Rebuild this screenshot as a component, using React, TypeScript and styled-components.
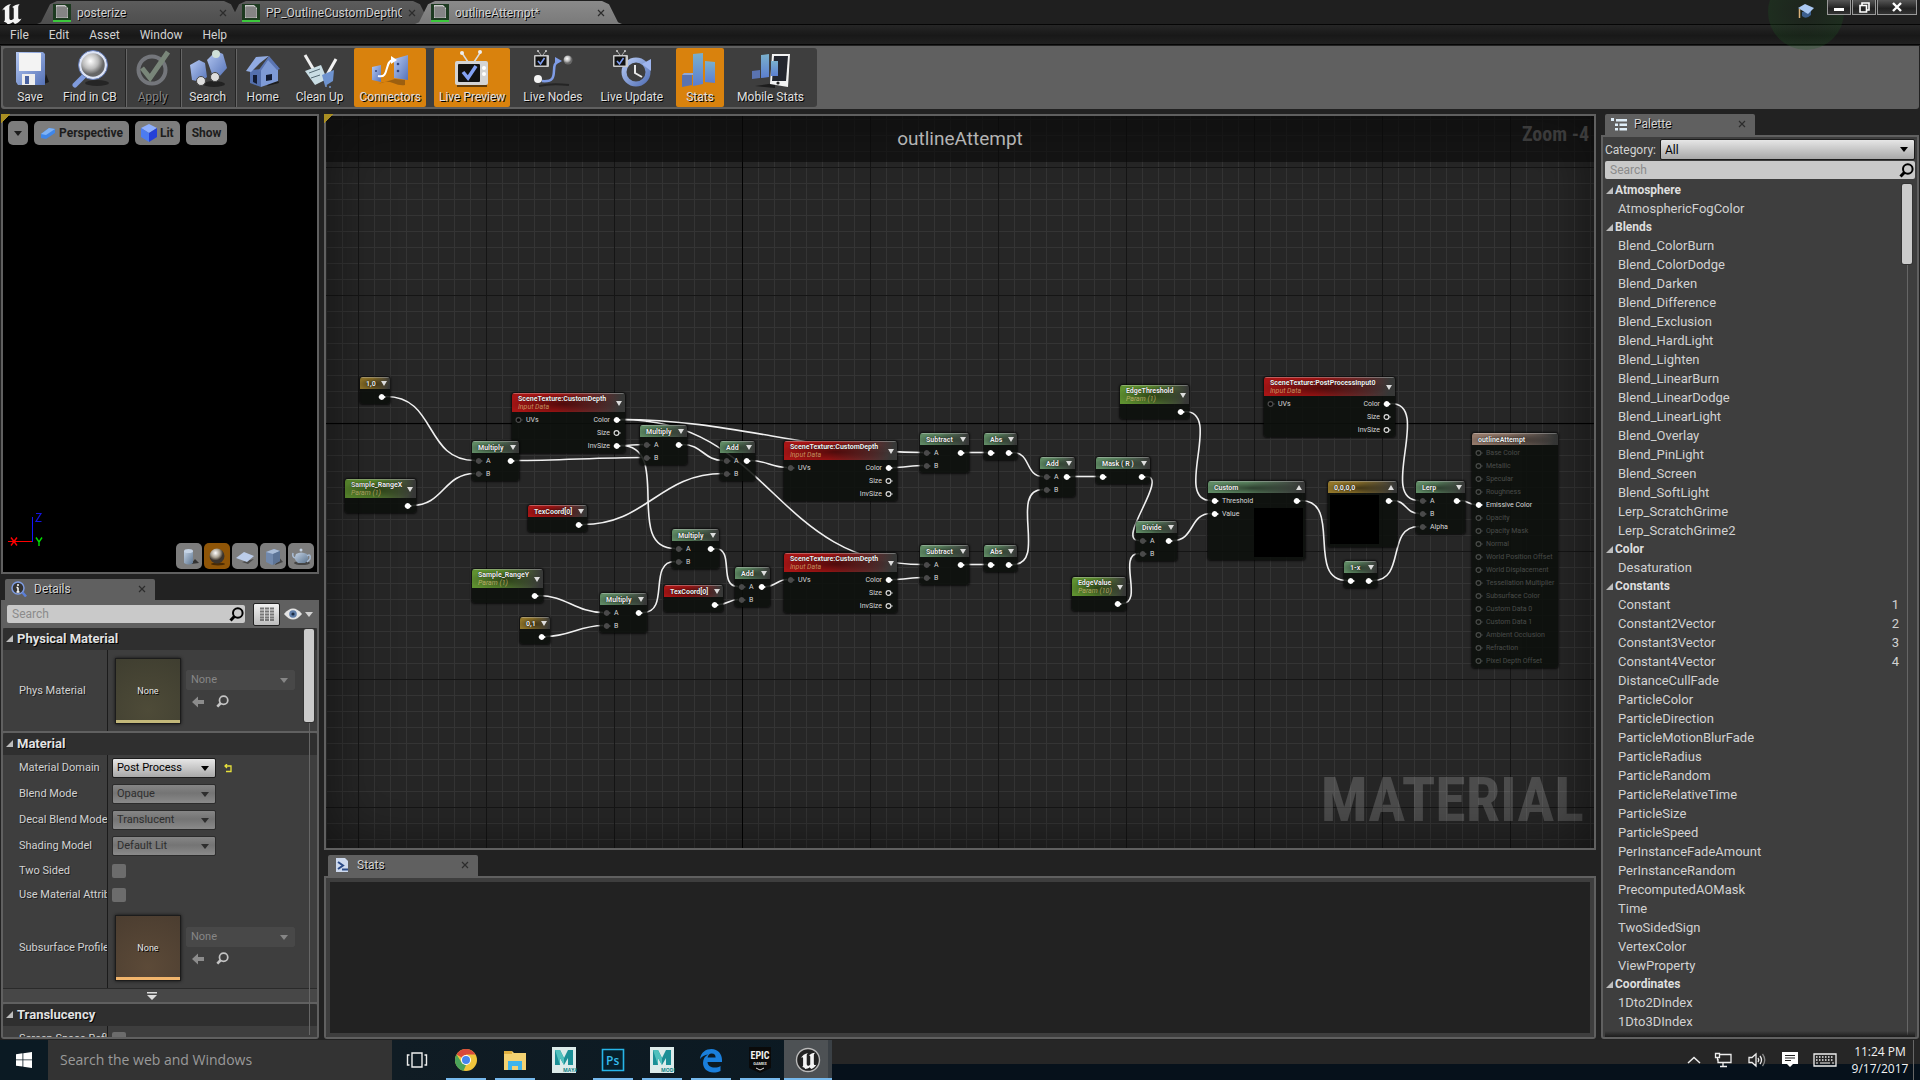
import React from "react";
import styled, { createGlobalStyle, css } from "styled-components";

const GlobalStyle = createGlobalStyle`
  *, *::before, *::after { box-sizing: border-box; }
  body { margin: 0; background: #222; }
  button, input, select { font: inherit; color: inherit; margin: 0; }
  ul { list-style: none; margin: 0; padding: 0; }
  h1, h2, h3, p { margin: 0; font-size: inherit; font-weight: inherit; }
`;

const FRAME = "#606060";
const PANEL = "#3e3e3e";

const Shell = styled.div`
  height: 100vh;
  display: flex;
  flex-direction: column;
  overflow: hidden;
  background: #222;
  color: #d2d2d2;
  font: 12px/16px Roboto, "Liberation Sans", sans-serif;
`;

/* ---------- title bar ---------- */

const TitleBar = styled.header`
  height: 25px;
  flex: none;
  display: flex;
  align-items: flex-start;
  background: #1f1f1f;
  border-bottom: 1px solid #050505;
`;
const LogoBox = styled.div`
  width: 37px;
  padding: 3px 0 0 1px;
`;
const TabStrip = styled.nav`
  display: flex;
  flex: 1;
  padding-top: 1px;
`;
const DocTab = styled.div<{ $active?: boolean }>`
  position: relative;
  z-index: ${(p) => (p.$active ? 2 : 1)};
  width: 207px;
  height: 23px;
  margin-right: -18px;
  padding: 0 17px 0 16px;
  display: flex;
  align-items: center;
  gap: 6px;
  background: ${(p) => (p.$active ? "linear-gradient(#8a8a8a, #7a7a7a)" : "linear-gradient(#5c5c5c, #4e4e4e)")};
  clip-path: polygon(0 100%, 4px 92%, 13px 14%, 20px 0, calc(100% - 20px) 0, calc(100% - 13px) 14%, calc(100% - 4px) 92%, 100% 100%);
  text-shadow: 1px 1px 0 #000;
`;
const DocName = styled.span`
  flex: 1;
  overflow: hidden;
  white-space: nowrap;
`;
const BareButton = styled.button`
  display: inline-flex;
  align-items: center;
  justify-content: center;
  padding: 0;
  border: 0;
  background: none;
`;
const WindowButtons = styled.div`
  display: flex;
  gap: 1px;
  padding-right: 3px;
`;
const WindowButton = styled(BareButton)<{ $wide?: boolean }>`
  position: relative;
  z-index: 4;
  width: ${(p) => (p.$wide ? 40 : 24)}px;
  height: 15px;
  border: 1px solid #999;
  border-top: 0;
  background: linear-gradient(#555, #222 60%, #333);
`;
const Tutorial = styled(BareButton)`
  position: relative;
  z-index: 3;
  width: 42px;
  height: 22px;
  &::before {
    content: "";
    position: absolute;
    left: -17px;
    top: -26px;
    width: 76px;
    height: 76px;
    border-radius: 50%;
    background: radial-gradient(circle, rgba(20, 60, 20, 0.15), rgba(30, 90, 35, 0.32));
    pointer-events: none;
  }
  svg { position: relative; }
`;

/* ---------- menu + tool bar ---------- */

const MenuBar = styled.nav`
  height: 20px;
  flex: none;
  display: flex;
  background: linear-gradient(#262626, #181818 55%, #202020);
  border-bottom: 1px solid #050505;
`;
const MenuItem = styled(BareButton)`
  padding: 0 10px;
`;
const ToolBar = styled.div`
  flex: none;
  display: flex;
  margin: 1px 1px 5px;
  padding: 2px;
  background: ${FRAME};
  border-radius: 0 0 3px 3px;
`;
const Tools = styled.div`
  display: flex;
  align-items: stretch;
  height: 59px;
  padding: 0 4px 0 1px;
  background: ${PANEL};
  border-radius: 3px;
`;
const ToolButton = styled(BareButton)<{ $on?: boolean; $spaced?: boolean; $dim?: boolean }>`
  flex-direction: column;
  justify-content: flex-end;
  gap: 1px;
  min-width: 48px;
  padding: 0 5px 2px;
  margin: 0 ${(p) => (p.$spaced ? 4 : 2)}px;
  border-radius: 2px;
  background: ${(p) => (p.$on ? "#d9820d" : "transparent")};
  color: ${(p) => (p.$dim ? "#858585" : "#e0e0e0")};
  text-shadow: 1px 1px 0 #000;
  svg { width: 40px; height: 38px; margin: 0 -2px; opacity: ${(p) => (p.$dim ? 0.7 : 1)}; }
`;
const ToolDivider = styled.span`
  width: 2px;
  margin: 1px 0 0 1px;
  background: linear-gradient(90deg, #252525 50%, #666 50%);
`;

/* ---------- main area ---------- */

const Main = styled.main`
  flex: 1;
  min-height: 0;
  display: grid;
  grid-template-columns: 318px minmax(0, 1fr) 318px;
  gap: 5px;
  padding: 0 1px 1px;
`;
const Column = styled.div`
  min-height: 0;
  min-width: 0;
  display: flex;
  flex-direction: column;
`;
const Corner = styled.i`
  position: absolute;
  top: -2px;
  left: -2px;
  width: 9px;
  height: 9px;
  background: linear-gradient(135deg, #a98e22 50%, transparent 50%);
`;
const Viewport = styled.section`
  position: relative;
  height: 460px;
  flex: none;
  display: flex;
  flex-direction: column;
  justify-content: space-between;
  padding: 5px 3px 3px 5px;
  background: #000;
  border: 2px solid ${FRAME};
`;
const ViewOptions = styled.div`
  display: flex;
  gap: 6px;
`;
const ViewButton = styled(BareButton)`
  height: 24px;
  gap: 3px;
  padding: 0 6px;
  border-radius: 5px;
  background: #7d7d7d;
  color: #1c1c1c;
  font-weight: 700;
`;
const ViewFooter = styled.div`
  display: flex;
  justify-content: space-between;
  align-items: flex-end;
`;
const Shapes = styled.div`
  display: flex;
  gap: 2px;
`;
const ShapeButton = styled(BareButton)<{ $on?: boolean }>`
  width: 26px;
  height: 26px;
  border-radius: 5px;
  background: ${(p) => (p.$on ? "#8f5507" : "#7d7d7d")};
`;

const PanelTab = styled.div`
  align-self: flex-start;
  width: 150px;
  height: 21px;
  flex: none;
  margin: 0 4px;
  padding: 0 9px 1px 6px;
  display: flex;
  align-items: center;
  gap: 7px;
  background: ${FRAME};
  border-radius: 2px 2px 0 0;
  text-shadow: 1px 1px 0 #000;
`;
const LowerTab = styled(PanelTab)`
  margin-top: 5px;
`;
const Grow = styled.span`
  flex: 1;
`;

/* ---------- details ---------- */

const DetailsPanel = styled.section`
  flex: 1;
  min-height: 0;
  display: flex;
  flex-direction: column;
  padding: 0 2px 2px;
  background: ${FRAME};
  border-radius: 0 0 3px 3px;
`;
const DetailsTools = styled.div`
  height: 28px;
  flex: none;
  display: flex;
  align-items: center;
  padding: 0 4px;
  gap: 8px;
`;
const SearchBox = styled.label`
  flex: 1;
  height: 18px;
  display: flex;
  align-items: center;
  padding: 0 1px 0 5px;
  background: #c9c9c9;
  border-radius: 2px;
  input {
    flex: 1;
    min-width: 0;
    padding: 0;
    border: 0;
    outline: 0;
    background: none;
    color: #111;
  }
  input::placeholder { color: #8b8b8b; opacity: 1; }
`;
const MatrixButton = styled(BareButton)`
  width: 27px;
  height: 23px;
  border: 1px solid #222;
  border-radius: 2px;
  background: linear-gradient(#f0f0f0, #bdbdbd);
`;
const EyeButton = styled(BareButton)`
  gap: 3px;
  margin-left: -4px;
`;
const DetailsScroll = styled.div`
  position: relative;
  flex: 1;
  min-height: 0;
  overflow: hidden;
`;
const Category = styled.section`
  margin-bottom: 2px;
  background: ${PANEL};
`;
const CategoryTitle = styled.h2`
  height: 22px;
  display: flex;
  align-items: center;
  gap: 4px;
  padding: 0 3px 1px;
  background: #2f2f2f;
  border-radius: 3px 3px 0 0;
  color: #e2e2e2;
  font-weight: 700;
  font-size: 13px;
  text-shadow: 1px 1px 0 #000;
`;
const Row = styled.div<{ $h: number }>`
  height: ${(p) => p.$h}px;
  display: flex;
  align-items: center;
`;
const RowLabel = styled.label`
  width: 105px;
  height: 100%;
  flex: none;
  display: flex;
  align-items: center;
  padding-left: 16px;
  border-right: 1px solid #1b1b1b;
  overflow: hidden;
  white-space: nowrap;
  font-size: 11px;
  text-shadow: 1px 1px 0 #222;
`;
const RowValue = styled.div`
  display: flex;
  align-items: center;
  gap: 8px;
  padding-left: 4px;
`;
const SelectWrap = styled.span<{ $w?: number; $look?: "dim" | "flat" }>`
  display: grid;
  align-items: center;
  width: ${(p) => (p.$w ? p.$w + "px" : "auto")};
  flex: ${(p) => (p.$w ? "none" : 1)};
  height: ${(p) => (p.$w ? 20 : 21)}px;
  border: 1px solid #1c1c1c;
  border-radius: 2px;
  background: linear-gradient(#e6e6e6, #a8a8a8);
  color: #000;
  font-size: ${(p) => (p.$w ? 11 : 12)}px;
  ${(p) =>
    p.$look === "dim" &&
    css`
      border-color: #2c2c2c;
      background: linear-gradient(#868686, #747474 45%, #8a8a8a);
      color: #2e2e2e;
    `}
  ${(p) =>
    p.$look === "flat" &&
    css`
      border-color: #484848;
      background: #484848;
      color: #868686;
    `}
  select {
    grid-area: 1 / 1;
    width: 100%;
    height: 100%;
    padding: 0 4px;
    border: 0;
    outline: 0;
    appearance: none;
    background: none;
    color: inherit;
  }
  svg {
    grid-area: 1 / 1;
    justify-self: end;
    margin-right: 6px;
    pointer-events: none;
  }
`;
const CheckBox = styled.input`
  appearance: none;
  width: 14px;
  height: 14px;
  border-radius: 2px;
  background: #6c6c6c;
`;
const Thumb = styled.div<{ $tint: string; $bar: string }>`
  width: 66px;
  height: 66px;
  margin-left: 3px;
  display: flex;
  align-items: center;
  justify-content: center;
  border: 1px solid #1c1c1c;
  background: linear-gradient(${(p) => p.$bar}, ${(p) => p.$bar}) bottom / 100% 3px no-repeat, ${(p) => p.$tint};
  box-shadow: 0 0 3px #111;
  color: #e6e6e6;
  font-size: 9px;
  text-shadow: 1px 1px 0 #000;
`;
const AssetControls = styled.div`
  display: flex;
  flex-direction: column;
  gap: 5px;
  margin-left: -3px;
  padding-bottom: 3px;
`;
const AssetButtons = styled.div`
  display: flex;
  gap: 12px;
  padding-left: 6px;
`;
const Expander = styled(BareButton)`
  display: flex;
  width: 100%;
  height: 14px;
  padding-right: 16px;
  border-top: 1px solid #2a2a2a;
  background: #474747;
`;
const ScrollTrack = styled.div`
  position: absolute;
  top: 1px;
  right: 3px;
  bottom: 2px;
  width: 10px;
  background: linear-gradient(#666, #666) center / 1px 100% no-repeat;
`;
const ScrollThumb = styled.div<{ $h: number }>`
  height: ${(p) => p.$h}px;
  background: #cbcbcb;
  border-radius: 2px;
  box-shadow: 0 0 0 1px #333;
`;

/* ---------- graph ---------- */

const Graph = styled.section`
  position: relative;
  flex: 1;
  min-height: 0;
  border: 2px solid ${FRAME};
  background-color: #262626;
  background-image:
    linear-gradient(90deg, #000 1px, transparent 1px),
    linear-gradient(#000 1px, transparent 1px),
    linear-gradient(90deg, #151515 1px, transparent 1px),
    linear-gradient(#151515 1px, transparent 1px),
    linear-gradient(90deg, #343434 1px, transparent 1px),
    linear-gradient(#343434 1px, transparent 1px);
  background-size: 4000px 100%, 100% 4000px, 128px 128px, 128px 128px, 16px 16px, 16px 16px;
  background-position: 416px 0, 0 307px, 32px 0, 0 51px, 0 0, 0 3px;
`;
const Canvas = styled.div`
  position: absolute;
  inset: 0;
  overflow: hidden;
`;
const Vignette = styled.div`
  position: absolute;
  inset: 0;
  box-shadow: inset 0 0 60px rgba(0, 0, 0, 0.55);
  pointer-events: none;
`;
const GraphHeader = styled.header`
  position: relative;
  height: 46px;
  display: grid;
  grid-template-columns: 1fr auto 1fr;
  align-items: center;
  padding: 0 5px;
  background: rgba(10, 10, 10, 0.62);
`;
const GraphTitle = styled.h1`
  grid-column: 2;
  color: #b4b4b4;
  font-size: 19px;
  line-height: 24px;
`;
const ZoomLabel = styled.span`
  justify-self: end;
  align-self: start;
  padding-top: 6px;
  color: #3b3b3b;
  font: 700 20px/24px "Roboto Condensed", Roboto, sans-serif;
`;
const Watermark = styled.p`
  position: absolute;
  right: 10px;
  bottom: 10px;
  color: rgba(255, 255, 255, 0.18);
  font: 700 62px/76px "Roboto Condensed", Roboto, sans-serif;
`;
const WireLayer = styled.svg`
  position: absolute;
  inset: 0;
  width: 100%;
  height: 100%;
  path { fill: none; stroke: #f0f0f0; stroke-width: 1.6; }
`;

type Tone = "math" | "tex" | "param" | "const" | "root";
const tones: Record<Tone, string> = {
  math: "#5f8a64",
  tex: "#a81515",
  param: "#5f9130",
  const: "#92762a",
  root: "#93796a",
};

const NodeBox = styled.article<{ $x: number; $y: number; $w: number; $h?: number }>`
  position: absolute;
  left: ${(p) => p.$x}px;
  top: ${(p) => p.$y}px;
  width: ${(p) => p.$w}px;
  ${(p) => p.$h && `height: ${p.$h}px;`}
  padding-bottom: 1px;
  display: flex;
  flex-direction: column;
  border-radius: 3px;
  background: rgba(13, 16, 13, 0.88);
  box-shadow: 0 0 2px 1px rgba(0, 0, 0, 0.7);
  font-size: 7px;
  line-height: 8px;
  overflow: hidden;
`;
const NodeHead = styled.header<{ $tone: Tone; $tall?: boolean }>`
  height: ${(p) => (p.$tall ? 19 : 12)}px;
  margin-bottom: 1px;
  display: flex;
  align-items: center;
  justify-content: space-between;
  padding: 0 3px 0 6px;
  border-top: 1px solid rgba(255, 255, 255, 0.3);
  background:
    radial-gradient(ellipse 50% 60% at 45% 55%, rgba(0, 0, 0, 0.5), transparent),
    linear-gradient(100deg, ${(p) => tones[p.$tone]} 40%, rgba(60, 60, 60, 0.9) 95%);
`;
const NodeName = styled.h3`
  color: #f0f0f0;
  font-weight: 700;
  white-space: nowrap;
  text-shadow: 0 0 1px #000;
`;
const NodeNote = styled.p`
  color: rgba(225, 200, 130, 0.7);
  font-style: italic;
`;
const NodeBody = styled.div`
  flex: 1;
  display: flex;
  justify-content: space-between;
  padding: 0 4px 0 3px;
`;
const PinList = styled.ul<{ $end?: boolean }>`
  li {
    height: 13px;
    display: flex;
    align-items: center;
    justify-content: ${(p) => (p.$end ? "flex-end" : "flex-start")};
    gap: 3px;
    color: #d8d8d8;
    white-space: nowrap;
  }
`;
const PinItem = styled.li<{ $off?: boolean }>`
  opacity: ${(p) => (p.$off ? 0.28 : 1)};
`;
const Preview = styled.div<{ $left?: boolean }>`
  position: absolute;
  width: 49px;
  height: 49px;
  bottom: 3px;
  ${(p) => (p.$left ? "left: 2px;" : "right: 2px;")}
  background: #000;
`;

/* ---------- stats ---------- */

const StatsPanel = styled.section`
  height: 163px;
  flex: none;
  border: 2px solid ${FRAME};
  border-radius: 0 0 3px 3px;
  outline: 4px solid ${PANEL};
  outline-offset: -6px;
  background: #222;
`;

/* ---------- palette ---------- */

const PalettePanel = styled.section`
  flex: 1;
  min-height: 0;
  display: flex;
  flex-direction: column;
  border: 2px solid ${FRAME};
  border-radius: 0 0 3px 3px;
  background: ${PANEL};
  padding: 2px 2px 0;
`;
const CategoryRow = styled.div`
  display: flex;
  align-items: center;
  gap: 4px;
`;
const PaletteSearch = styled(SearchBox)`
  flex: none;
  margin-top: 1px;
`;
const PaletteScroll = styled.div`
  position: relative;
  flex: 1;
  min-height: 0;
  margin-top: 2px;
  overflow: hidden;
  &::after {
    content: "";
    position: absolute;
    inset: auto 0 0;
    height: 6px;
    background: linear-gradient(transparent, #1c1c1c);
  }
`;
const GroupName = styled.h3`
  height: 18px;
  display: flex;
  align-items: center;
  gap: 2px;
  padding-left: 1px;
  color: #dedede;
  font-weight: 700;
`;
const Entry = styled.li`
  height: 19px;
  display: flex;
  align-items: center;
  justify-content: space-between;
  padding: 0 16px 0 13px;
  font-size: 13px;
`;
const PaletteTrack = styled(ScrollTrack)`
  top: 3px;
  right: 3px;
`;

/* ---------- task bar ---------- */

const TaskBar = styled.footer`
  height: 40px;
  flex: none;
  display: flex;
  background: linear-gradient(#262626 24px, #06111b 24px);
  font-family: "Open Sans", "Noto Sans", sans-serif;
`;
const StartButton = styled(BareButton)`
  width: 48px;
  background: #0b1a23;
`;
const TaskSearch = styled.input`
  width: 344px;
  padding: 0 12px;
  border: 0;
  outline: 0;
  background: #333;
  font-size: 14px;
  &::placeholder { color: #9a9a9a; opacity: 1; }
`;
const TaskApps = styled.div`
  display: flex;
  background: linear-gradient(90deg, #101c24, #0b1922);
`;
const TaskApp = styled(BareButton)<{ $run?: boolean; $active?: boolean }>`
  width: ${(p) => (p.$active ? 48 : 49)}px;
  background:
    ${(p) => (p.$run ? `linear-gradient(#76b9ed, #76b9ed) bottom / ${p.$active ? 48 : 40}px 2px no-repeat,` : "")}
    ${(p) => (p.$active ? "linear-gradient(90deg, #4d5154 44px, #3a4045 44px)" : "none")};
  svg { width: 26px; height: 26px; }
`;
const Tray = styled.div`
  display: flex;
  align-items: center;
  gap: 13px;
  padding-right: 10px;
`;
const Clock = styled.time`
  width: 66px;
  align-self: center;
  text-align: center;
  color: #f2f2f2;
  font-size: 12px;
  line-height: 17px;
`;
const ShowDesktop = styled(BareButton)`
  width: 5px;
  margin-right: 2px;
  border-left: 1px solid #666;
`;

/* ---------- icons ---------- */

const UnrealMark = ({ size }: { size: number }) => (
  <svg width={size} height={size} viewBox="0 0 24 24" fill="#f4f4f4">
    <path d="M1 8.500C3 4.500 6.500 2 11 1.200c-1.300 1-1.900 2.100-1.900 3.600v11.200c0 1.700.7 2.500 1.900 2.500 1.100 0 2.100-.7 2.900-1.700V6.500c0-1.200-.6-1.900-1.900-1.800 2.500-2.200 5-3.300 8.500-3.700-1.300 1.300-1.700 2.300-1.700 3.900v11c0 1.300.5 1.800 1.400 1.800.8 0 1.500-.4 2.200-.9-1.700 3-3.900 4.900-7.200 6.200l-2.100-2.200c-1.600 1.400-3.600 2.200-6.100 2.200-.8-1.700-2.300-2.500-4-2.600.9-.6 1.200-1.200 1.200-2.300V8.200c0-.8-.4-1.200-1-1.200-.7 0-1.400.5-2.200 1.500z" />
  </svg>
);
const DocIcon = () => (
  <svg width="18" height="18" viewBox="0 0 18 18">
    <rect width="18" height="18" fill="#1d3a20" />
    <path d="M3 1h9l3 3v10H3z" fill="#c8c8c8" />
    <path d="M5 2v12M7 2v12M9 2v12M11 2v12M13 3v11M3 4h11M3 6h12M3 8h12M3 10h12M3 12h12" stroke="#555" strokeWidth=".7" />
    <rect y="16" width="18" height="2" fill="#3cc83c" />
  </svg>
);
const Cross = () => (
  <svg width="8" height="8" viewBox="0 0 8 8"><path d="M1 1l6 6M7 1L1 7" stroke="#2c2c2c" strokeWidth="1.200" /></svg>
);
const Caret = ({ up }: { up?: boolean }) => (
  <svg width="8" height="5" viewBox="0 0 8 5"><path d={up ? "M0 5h8L4 0z" : "M0 0h8L4 5z"} fill="currentColor" /></svg>
);
const Fold = () => (
  <svg width="7" height="7" viewBox="0 0 7 7"><path d="M7 0v7H0z" fill="#bdbdbd" /></svg>
);
const Magnifier = ({ size = 15, color = "#000" }: { size?: number; color?: string }) => (
  <svg width={size} height={size} viewBox="0 0 15 15" fill="none" stroke={color}>
    <circle cx="8.800" cy="6" r="4.800" strokeWidth="2" /><path d="M5.300 9.500L1.500 13.500" strokeWidth="3" />
  </svg>
);
const BackArrow = () => (
  <svg width="12" height="12" viewBox="0 0 12 12"><path d="M0 6l6-5.500v3.500h6v4H6v3.500z" fill="#8c8c8c" /></svg>
);

const DefsHolder = styled.svg`
  position: absolute;
  width: 0;
  height: 0;
`;
const Defs = () => (
  <DefsHolder aria-hidden="true">
    <defs>
      <linearGradient id="blue" x1="0" y1="0" x2="1" y2="1"><stop offset="0" stopColor="#b4c8f2" /><stop offset="1" stopColor="#5673b8" /></linearGradient>
      <linearGradient id="cyan" x1="0" y1="0" x2="0" y2="1"><stop offset="0" stopColor="#7ab0cc" /><stop offset="1" stopColor="#5b7ed0" /></linearGradient>
      <linearGradient id="steel" x1="0" y1="0" x2="1" y2="1"><stop offset="0" stopColor="#c3d2e4" /><stop offset="1" stopColor="#5d7590" /></linearGradient>
      <radialGradient id="lens" cx=".4" cy=".35"><stop offset="0" stopColor="#fff" /><stop offset=".6" stopColor="#bbb" /><stop offset="1" stopColor="#666" /></radialGradient>
      <radialGradient id="ball" cx=".4" cy=".3"><stop offset="0" stopColor="#fff" /><stop offset=".6" stopColor="#a8a090" /><stop offset="1" stopColor="#3c342c" /></radialGradient>
    </defs>
  </DefsHolder>
);

const tv = (
  <g>
    <path d="M8 5L5 1M10 5l3-4" stroke="#ccc" strokeWidth=".8" />
    <circle cx="5" cy="1" r=".9" fill="#ddd" /><circle cx="13" cy="1" r=".9" fill="#ddd" />
    <rect x="1" y="5" width="15" height="12" rx="1" fill="#c9c9c9" />
    <rect x="2.500" y="6.500" width="11" height="9" fill="#111" />
    <path d="M5 11l2.500 3 4-6" fill="none" stroke="#7d9cf0" strokeWidth="1.600" />
  </g>
);

const toolIcons: Record<string, React.ReactNode> = {
  Save: (<><path d="M34 34l5-2-3-8z" fill="#1c1c1c" /><path d="M6 2h27l2 2v31H8l-2-3z" fill="url(#blue)" /><path d="M9 3h22v18H9z" fill="#f3f3f3" /><path d="M12 24h13v11H12z" fill="#eee" /><path d="M15 26h4v8h-4z" fill="#4a62a0" /></>),
  Find: (<><ellipse cx="27" cy="33" rx="12" ry="3" fill="#252525" /><path d="M16 24L5 35" stroke="#7f9bdd" strokeWidth="5" strokeLinecap="round" /><circle cx="23" cy="15" r="13" fill="url(#lens)" stroke="#dde4f5" strokeWidth="2.500" /><circle cx="23" cy="15" r="14.500" fill="none" stroke="#6a82bd" strokeWidth="1" /></>),
  Apply: (<><circle cx="19" cy="20" r="13.500" fill="none" stroke="#8b8f96" strokeWidth="4" /><path d="M9 18l8 10L35 2" fill="none" stroke="#93a592" strokeWidth="5" /></>),
  Search: (<><ellipse cx="26" cy="34" rx="11" ry="3" fill="#222" /><path d="M2 15l9-5 6 3 2 14-6 5-9-2z" fill="url(#blue)" /><path d="M19 10l9-9 7 3 4 14-8 9-7-3z" fill="url(#blue)" /><circle cx="13" cy="31" r="4.500" fill="#ddd" stroke="#444" /><circle cx="27" cy="27" r="4.500" fill="#ddd" stroke="#444" /><circle cx="28" cy="4" r="4" fill="#cfe0d8" /></>),
  Home: (<><path d="M24 36l12-3-4-10z" fill="#1c1c1c" /><path d="M7 20v13l11 4V19z" fill="#5470ae" /><path d="M18 19l8-11 9 9v14l-17 6z" fill="#7e9ad6" /><path d="M26 6L13 7 3 21l5 1 9-9" fill="#91abe2" /><path d="M26 6l11 13-3 1-9-10-8 12-2-1z" fill="#5a74b2" /><path d="M10 25h4v9l-4-2zM23 25l6-1v6l-6 1z" fill="#121b33" /></>),
  Clean: (<><path d="M5 5l10 17" stroke="#eee" strokeWidth="3" /><path d="M5 21l16-6 6 14-12 6z" fill="#c9dde4" /><path d="M36 9L27 25" stroke="#f2f2f2" strokeWidth="3" /><path d="M22 25l12-5-1 11-8 5z" fill="#6e93cf" /><path d="M9 23l11-4M11 28l9-3" stroke="#556a75" /><circle cx="30" cy="37" r="1" fill="#79c" /><circle cx="26" cy="36" r="1" fill="#79c" /></>),
  Connectors: (<><path d="M8 34q8-4 15-1t12 2v-5l-10-1z" fill="#9c5f10" /><path d="M2 17l9-2v17l-9-2z" fill="url(#blue)" /><path d="M24 9l14-4v25l-14-2z" fill="url(#blue)" /><path d="M8 26c12 3 6-15 15-16" fill="none" stroke="#fff" strokeWidth="2" /><path d="M21 6l6 4-6 4z" fill="#fff" /><circle cx="28" cy="14" r="1.300" fill="#33457c" /><circle cx="28" cy="21" r="1.300" fill="#33457c" /><circle cx="6" cy="21" r="1" fill="#33457c" /></>),
  Preview: (<><path d="M16 12L10 3M22 12l6-9" stroke="#ddd" strokeWidth="1.500" /><circle cx="10" cy="3" r="2" fill="#eee" /><circle cx="28" cy="2" r="2" fill="#eee" /><path d="M5 34h30v3H5z" fill="#5f3b0b" /><rect x="3" y="11" width="33" height="24" rx="2" fill="#d4d4d4" /><rect x="6" y="14" width="22" height="18" rx="1" fill="#121212" /><path d="M11 22l5 6 8-12" fill="none" stroke="#84a2f4" strokeWidth="3.500" /><circle cx="32" cy="18" r="2" fill="#fff" /><circle cx="32" cy="24" r="2" fill="#fff" /></>),
  Nodes: (<>{tv}<path d="M9 31c20 2 6-17 17-20" fill="none" stroke="#7f9ce6" strokeWidth="2.500" /><path d="M22 7l7 4-7 4z" fill="#7f9ce6" /><circle cx="35" cy="10" r="4.500" fill="url(#lens)" /><circle cx="5" cy="29" r="4" fill="#f4f4f4" /><path d="M6 36q12-3 30-1" stroke="#252525" strokeWidth="2" fill="none" /></>),
  Update: (<><circle cx="24" cy="22" r="12" fill="none" stroke="url(#blue)" strokeWidth="5" /><path d="M30 14l9-5v12z" fill="#9eb5ee" /><path d="M23 15v8l7 4" fill="none" stroke="#e8e8e8" strokeWidth="2" />{tv}</>),
  Stats: (<><path d="M2 25l10-1v11l-10 2z" fill="#5a73b0" /><path d="M13 4l10-1v31l-10 2z" fill="url(#cyan)" /><path d="M25 11l10 1v21l-10-1z" fill="url(#cyan)" /><path d="M2 25l2-2h9v2z" fill="#8fa7d8" /></>),
  Mobile: (<><path d="M4 36l20-3v5z" fill="#1d1d1d" /><path d="M21 4h18l-2 33-18-3z" fill="#f2f2f2" /><path d="M23 6h14l-2 25H21z" fill="#23262e" /><path d="M1 21l8-1v8l-8 1z" fill="#5a73b0" /><path d="M10 5l8-1v23l-8 1z" fill="url(#cyan)" /><path d="M20 11h7v15h-7z" fill="url(#cyan)" /><circle cx="27" cy="33" r="1.600" fill="#222" /></>),
};

const shapeIcons: [string, React.ReactNode][] = [
  ["Cylinder", <><path d="M12 18l8-1-4-4z" fill="#333" /><path d="M5 5v12q5 3 9 0V5z" fill="url(#steel)" /><ellipse cx="9.500" cy="5" rx="4.500" ry="2" fill="#c6d4e6" /></>],
  ["Sphere", <><ellipse cx="11" cy="18" rx="7" ry="1.500" fill="#4a2b04" /><circle cx="10" cy="10" r="7.500" fill="url(#ball)" /></>],
  ["Plane", <><path d="M7 16l6 2 6-5z" fill="#4a4a4a" /><path d="M1 12l8-6 10 4-7 6z" fill="#bccdea" /></>],
  ["Cube", <><path d="M12 19l8-3-5-6z" fill="#444" /><path d="M3 6l8-3 6 2v10l-8 4-6-3z" fill="#7189ad" /><path d="M3 6l8-3 6 2-7 3z" fill="#aabdd8" /><path d="M10 8l7-3v10l-7 4z" fill="#5d7496" /></>],
  ["Teapot", <><ellipse cx="11" cy="17" rx="8" ry="2" fill="#444" /><path d="M5 8q5-3 11 0 3 6-2 9H7q-5-3-2-9z" fill="url(#steel)" /><path d="M4 12Q1 11 2 7M16 10q4-3 3 3l-3 3" fill="none" stroke="#a9bdd6" strokeWidth="1.500" /><circle cx="10" cy="4" r="1.500" fill="#c6d4e6" /></>],
];

/* ---------- graph data ---------- */

interface GraphNode {
  id: string;
  name: string;
  tone: Tone;
  x: number;
  y: number;
  w: number;
  h?: number;
  note?: string;
  ins?: string[];
  outs?: string[];
  closed?: boolean;
  preview?: "left" | "right";
}

const binary = (id: string, name: string, x: number, y: number, w: number): GraphNode => ({ id, name, tone: "math", x, y, w, ins: ["A", "B"], outs: [""] });
const sceneTexture = (id: string, name: string, x: number, y: number, w: number): GraphNode => ({ id, name, tone: "tex", x, y, w, note: "Input Data", ins: ["UVs"], outs: ["Color", "Size", "InvSize"] });
const unary = (id: string, name: string, x: number, y: number, w: number): GraphNode => ({ id, name, tone: "math", x, y, w, ins: [""], outs: [""] });
const source = (id: string, name: string, tone: Tone, x: number, y: number, w: number, note?: string): GraphNode => ({ id, name, tone, x, y, w, note, outs: [""] });

const rootPins = [
  "Base Color", "Metallic", "Specular", "Roughness", "Emissive Color", "Opacity", "Opacity Mask", "Normal",
  "World Position Offset", "World Displacement", "Tessellation Multiplier", "Subsurface Color", "Custom Data 0",
  "Custom Data 1", "Ambient Occlusion", "Refraction", "Pixel Depth Offset",
];

const nodes: GraphNode[] = [
  sceneTexture("st1", "SceneTexture:CustomDepth", 186, 277, 113),
  source("one", "1,0", "const", 34, 261, 30),
  binary("mul1", "Multiply", 146, 325, 47),
  source("rx", "Sample_RangeX", "param", 19, 363, 71, "Param (1)"),
  source("tc1", "TexCoord[0]", "tex", 202, 389, 59),
  binary("mul2", "Multiply", 314, 309, 47),
  binary("add1", "Add", 394, 325, 35),
  binary("mul3", "Multiply", 346, 413, 47),
  source("ry", "Sample_RangeY", "param", 146, 453, 71, "Param (1)"),
  binary("mul4", "Multiply", 274, 477, 47),
  source("zero", "0,1", "const", 194, 501, 30),
  source("tc2", "TexCoord[0]", "tex", 338, 469, 59),
  binary("add2", "Add", 409, 451, 35),
  sceneTexture("st2", "SceneTexture:CustomDepth", 458, 325, 113),
  sceneTexture("st3", "SceneTexture:CustomDepth", 458, 437, 113),
  binary("sub1", "Subtract", 594, 317, 49),
  unary("abs1", "Abs", 658, 317, 33),
  binary("sub2", "Subtract", 594, 429, 49),
  unary("abs2", "Abs", 658, 429, 33),
  binary("add3", "Add", 714, 341, 35),
  unary("mask", "Mask ( R )", 770, 341, 54),
  source("et", "EdgeThreshold", "param", 794, 269, 69, "Param (1)"),
  binary("div", "Divide", 810, 405, 41),
  source("ev", "EdgeValue", "param", 746, 461, 54, "Param (10)"),
  { id: "custom", name: "Custom", tone: "math", x: 882, y: 365, w: 97, h: 79, ins: ["Threshold", "Value"], outs: [""], closed: true, preview: "right" },
  { id: "vec", name: "0,0,0,0", tone: "const", x: 1002, y: 365, w: 69, h: 66, outs: [""], closed: true, preview: "left" },
  sceneTexture("pp", "SceneTexture:PostProcessInput0", 938, 261, 131),
  { id: "lerp", name: "Lerp", tone: "math", x: 1090, y: 365, w: 49, ins: ["A", "B", "Alpha"], outs: [""] },
  unary("inv", "1-x", 1018, 445, 33),
  { id: "root", name: "outlineAttempt", tone: "root", x: 1146, y: 317, w: 86, ins: rootPins },
];

const wires: [string, number, string, number][] = [
  ["one", 0, "mul1", 0], ["rx", 0, "mul1", 1], ["st1", 2, "mul2", 0], ["mul1", 0, "mul2", 1],
  ["st1", 2, "mul3", 0], ["mul4", 0, "mul3", 1], ["ry", 0, "mul4", 0], ["zero", 0, "mul4", 1],
  ["mul2", 0, "add1", 0], ["tc1", 0, "add1", 1], ["mul3", 0, "add2", 0], ["tc2", 0, "add2", 1],
  ["add1", 0, "st2", 0], ["add2", 0, "st3", 0], ["st1", 0, "sub1", 0], ["st1", 0, "sub2", 0],
  ["st2", 0, "sub1", 1], ["st3", 0, "sub2", 1], ["sub1", 0, "abs1", 0], ["sub2", 0, "abs2", 0],
  ["abs1", 0, "add3", 0], ["abs2", 0, "add3", 1], ["add3", 0, "mask", 0], ["mask", 0, "div", 0],
  ["ev", 0, "div", 1], ["div", 0, "custom", 1], ["et", 0, "custom", 0], ["custom", 0, "inv", 0],
  ["inv", 0, "lerp", 2], ["vec", 0, "lerp", 1], ["pp", 0, "lerp", 0], ["lerp", 0, "root", 4],
];

const byId = Object.fromEntries(nodes.map((n) => [n.id, n]));
const pinY = (n: GraphNode, row: number) => n.y + (n.note ? 26 : 19) + row * 13 + 0.5;

const wirePath = ([from, out, to, into]: [string, number, string, number]) => {
  const a = byId[from];
  const b = byId[to];
  const x1 = a.x + a.w - 4;
  const y1 = pinY(a, out);
  const x2 = b.x + 3;
  const y2 = pinY(b, into);
  const reach = (Math.abs(x2 - x1) + Math.abs(y2 - y1)) / 3;
  return `M${x1} ${y1}C${x1 + reach} ${y1} ${x2 - reach} ${y2} ${x2} ${y2}`;
};

const Pin = ({ state }: { state: "on" | "open" | "hollow" | "dim" }) => {
  const ring = state === "open" ? "#ddd" : "#4c4c4c";
  return (
    <svg width="8" height="8" viewBox="0 0 8 8">
      {state === "open" || state === "hollow" ? (
        <><circle cx="3.500" cy="4" r="2.400" fill={state === "open" ? "none" : "#050505"} stroke={ring} strokeWidth="1.200" /><path d="M6.500 3l1.500 1-1.500 1z" fill={ring} /></>
      ) : (
        <path d="M3.500 1q2 0 3 2l1.500 1-1.500 1q-1 2-3 2t-3-3q1-3 3-3z" fill={state === "on" ? "#fff" : "#4a4a4a"} />
      )}
    </svg>
  );
};

const linked = (id: string, row: number, side: "in" | "out") =>
  wires.some((w) => (side === "in" ? w[2] === id && w[3] === row : w[0] === id && w[1] === row));

const inState = (n: GraphNode, row: number, label: string) => {
  if (!linked(n.id, row, "in")) return n.tone === "root" ? "open" : "hollow";
  return ["A", "B", "Alpha", "UVs"].includes(label) ? "dim" : "on";
};

const NodeView = ({ n }: { n: GraphNode }) => (
  <NodeBox $x={n.x} $y={n.y} $w={n.w} $h={n.h}>
    <NodeHead $tone={n.tone} $tall={!!n.note}>
      <div>
        <NodeName>{n.name}</NodeName>
        {n.note && <NodeNote>{n.note}</NodeNote>}
      </div>
      {n.tone !== "root" && (
        <svg width="6" height="5" viewBox="0 0 6 5"><path d={n.closed ? "M0 5h6L3 0z" : "M0 0h6L3 5z"} fill="#ddd" /></svg>
      )}
    </NodeHead>
    <NodeBody>
      <PinList>
        {(n.ins || []).map((label, i) => (
          <PinItem key={i} $off={n.tone === "root" && i !== 4}>
            <Pin state={inState(n, i, label)} />
            {label}
          </PinItem>
        ))}
      </PinList>
      <PinList $end>
        {(n.outs || []).map((label, i) => (
          <PinItem key={i}>
            {label}
            <Pin state={linked(n.id, i, "out") ? "on" : "open"} />
          </PinItem>
        ))}
      </PinList>
    </NodeBody>
    {n.preview && <Preview $left={n.preview === "left"} />}
  </NodeBox>
);

/* ---------- palette data ---------- */

const palette: [string, string[]][] = [
  ["Atmosphere", ["AtmosphericFogColor"]],
  ["Blends", ["Blend_ColorBurn", "Blend_ColorDodge", "Blend_Darken", "Blend_Difference", "Blend_Exclusion", "Blend_HardLight", "Blend_Lighten", "Blend_LinearBurn", "Blend_LinearDodge", "Blend_LinearLight", "Blend_Overlay", "Blend_PinLight", "Blend_Screen", "Blend_SoftLight", "Lerp_ScratchGrime", "Lerp_ScratchGrime2"]],
  ["Color", ["Desaturation"]],
  ["Constants", ["Constant|1", "Constant2Vector|2", "Constant3Vector|3", "Constant4Vector|4", "DistanceCullFade", "ParticleColor", "ParticleDirection", "ParticleMotionBlurFade", "ParticleRadius", "ParticleRandom", "ParticleRelativeTime", "ParticleSize", "ParticleSpeed", "PerInstanceFadeAmount", "PerInstanceRandom", "PrecomputedAOMask", "Time", "TwoSidedSign", "VertexColor", "ViewProperty"]],
  ["Coordinates", ["1Dto2DIndex", "1Dto3DIndex"]],
];

const Dropdown = ({ id, value, w, look }: { id: string; value: string; w?: number; look?: "dim" | "flat" }) => (
  <SelectWrap $w={w} $look={look}>
    <select id={id} defaultValue={value}><option>{value}</option></select>
    <Caret />
  </SelectWrap>
);

const AssetRow = ({ id, label, tint, bar }: { id: string; label: string; tint: string; bar: string }) => (
  <Row $h={81}>
    <RowLabel htmlFor={id}>{label}</RowLabel>
    <RowValue>
      <Thumb $tint={tint} $bar={bar}>None</Thumb>
      <AssetControls>
        <Dropdown id={id} value="None" w={109} look="flat" />
        <AssetButtons>
          <BareButton aria-label="Use selected"><BackArrow /></BareButton>
          <BareButton aria-label="Browse"><Magnifier size={13} color="#c4c4c4" /></BareButton>
        </AssetButtons>
      </AssetControls>
    </RowValue>
  </Row>
);

const Tool = ({ icon, label, ...rest }: { icon: string; label: string; $on?: boolean; $spaced?: boolean; $dim?: boolean }) => (
  <ToolButton {...rest}>
    <svg viewBox="0 0 40 38">{toolIcons[icon]}</svg>
    {label}
  </ToolButton>
);

const maya = (word: string) => (
  <svg viewBox="0 0 26 26"><path d="M1 0h24v26H1z" fill="#dcebea" /><path d="M4 3h5l4 8 4-8h5v15h-5v-7l-4 7-4-7v7H4z" fill="#1b8f96" /><path d="M4 3h5l4 8v7l-4-7v7z" fill="#4fc0bd" /><text x="12" y="25" fontSize="5" fontWeight="700" fill="#0f7f86">{word}</text></svg>
);

export default function App() {
  return (
    <Shell>
      <GlobalStyle />
      <Defs />
      <TitleBar>
        <LogoBox><UnrealMark size={22} /></LogoBox>
        <TabStrip>
          {["posterize", "PP_OutlineCustomDepthC", "outlineAttempt*"].map((name, i) => (
            <DocTab key={name} $active={i === 2}>
              <DocIcon />
              <DocName>{name}</DocName>
              <BareButton aria-label={"Close " + name}><Cross /></BareButton>
            </DocTab>
          ))}
        </TabStrip>
        <Tutorial aria-label="Tutorials">
          <svg width="16" height="15" viewBox="0 0 16 15"><path d="M4 8v4q4 4 9-1V7z" fill="#3c5f8e" /><path d="M0 4l7-4 9 4-6 6z" fill="#a9c8f2" /><path d="M1.500 5v9" stroke="#d9b27a" strokeWidth="1.500" /></svg>
        </Tutorial>
        <WindowButtons>
          <WindowButton aria-label="Minimize"><svg width="10" height="10"><path d="M0 6h10v3H0z" fill="#fff" /></svg></WindowButton>
          <WindowButton aria-label="Restore"><svg width="11" height="11" fill="none" stroke="#fff" strokeWidth="1.600"><path d="M3 3V1h7v7H8M1 3.500h6.500v6.500H1z" /></svg></WindowButton>
          <WindowButton $wide aria-label="Close"><svg width="10" height="10"><path d="M1 1l8 8M9 1L1 9" stroke="#fff" strokeWidth="2.400" /></svg></WindowButton>
        </WindowButtons>
      </TitleBar>
      <MenuBar>
        {["File", "Edit", "Asset", "Window", "Help"].map((m) => <MenuItem key={m}>{m}</MenuItem>)}
      </MenuBar>
      <ToolBar>
        <Tools>
          <Tool icon="Save" label="Save" />
          <Tool icon="Find" label="Find in CB" />
          <ToolDivider />
          <Tool icon="Apply" label="Apply" $dim />
          <ToolDivider />
          <Tool icon="Search" label="Search" />
          <ToolDivider />
          <Tool icon="Home" label="Home" />
          <Tool icon="Clean" label="Clean Up" />
          <Tool icon="Connectors" label="Connectors" $on $spaced />
          <Tool icon="Preview" label="Live Preview" $on $spaced />
          <Tool icon="Nodes" label="Live Nodes" $spaced />
          <Tool icon="Update" label="Live Update" $spaced />
          <Tool icon="Stats" label="Stats" $on $spaced />
          <Tool icon="Mobile" label="Mobile Stats" $spaced />
        </Tools>
      </ToolBar>

      <Main>
        <Column>
          <Viewport>
            <Corner />
            <ViewOptions>
              <ViewButton aria-label="Viewport options"><Caret /></ViewButton>
              <ViewButton><svg width="16" height="14" viewBox="0 0 16 14"><path d="M1 8l8-6 6 1v4l-9 6-5-1z" fill="#3f86e8" /><path d="M1 8l8-6 6 1-9 6z" fill="#7fb2f5" /></svg>Perspective</ViewButton>
              <ViewButton><svg width="16" height="18" viewBox="0 0 16 18"><path d="M0 4l8-4 8 4-8 5z" fill="#8fb0ff" /><path d="M0 4l8 5v9l-8-5z" fill="#4c7cf0" /><path d="M16 4L8 9v9l8-5z" fill="#2440d8" /></svg>Lit</ViewButton>
              <ViewButton>Show</ViewButton>
            </ViewOptions>
            <ViewFooter>
              <svg width="40" height="56" viewBox="0 0 40 56" strokeWidth="1" fill="none">
                <path d="M24.500 4v25" stroke="#1414ff" /><path d="M0 28.500h24" stroke="#f00" />
                <path d="M28 .500h5l-5 8h5.500" stroke="#1414e0" strokeWidth="1.200" />
                <path d="M3 24.500l6 8M9 24.500l-6 8" stroke="#f00" strokeWidth="1.400" />
                <path d="M28 24.500l3 4.500 3-4.500M31 29v4" stroke="#0d0" strokeWidth="1.400" />
              </svg>
              <Shapes>
                {shapeIcons.map(([name, art]) => (
                  <ShapeButton key={name} $on={name === "Sphere"} aria-label={name}><svg width="21" height="21" viewBox="0 0 21 21">{art}</svg></ShapeButton>
                ))}
              </Shapes>
            </ViewFooter>
          </Viewport>
          <LowerTab>
            <svg width="16" height="16" viewBox="0 0 16 16"><circle cx="7" cy="7" r="6" fill="#333" stroke="#7d9be0" strokeWidth="1.500" /><path d="M11.500 11.500l3.500 4" stroke="#5b7fd8" strokeWidth="2.500" /><path d="M7 3v2M7 6.500v4.500M5.500 6.500H7M5.500 11h3" stroke="#fff" strokeWidth="1.500" /></svg>
            Details<Grow /><BareButton aria-label="Close Details"><Cross /></BareButton>
          </LowerTab>
          <DetailsPanel>
            <DetailsTools>
              <SearchBox><input placeholder="Search" aria-label="Search details" /><Magnifier /></SearchBox>
              <MatrixButton aria-label="Property matrix"><svg width="14" height="14" viewBox="0 0 14 14"><path d="M0 1.500h14M0 4.500h14M0 7.500h14M0 10.500h14M0 13h14" stroke="#777" strokeWidth="2" /><path d="M4.500 0v14M9.500 0v14" stroke="#ddd" /></svg></MatrixButton>
              <EyeButton aria-label="View options">
                <svg width="18" height="12" viewBox="0 0 18 12"><path d="M0 6q9-11 18 0-9 11-18 0z" fill="#e4e4e4" /><circle cx="9" cy="6" r="3.800" fill="#5f7da8" /><circle cx="9" cy="6" r="1.600" fill="#1c2c44" /></svg>
                <Caret />
              </EyeButton>
            </DetailsTools>
            <DetailsScroll>
              <Category>
                <CategoryTitle><Fold />Physical Material</CategoryTitle>
                <AssetRow id="phys" label="Phys Material" tint="radial-gradient(circle at 50% 80%, #4e4b38, #3f3e30)" bar="#c3b87a" />
              </Category>
              <Category>
                <CategoryTitle><Fold />Material</CategoryTitle>
                <Row $h={26}>
                  <RowLabel htmlFor="domain">Material Domain</RowLabel>
                  <RowValue>
                    <Dropdown id="domain" value="Post Process" w={104} />
                    <BareButton aria-label="Reset to default"><svg width="8" height="9" viewBox="0 0 8 9"><path d="M1 2h6v5.500H2M3 0L1 2l2 2" fill="none" stroke="#e6e03c" strokeWidth="1.300" /></svg></BareButton>
                  </RowValue>
                </Row>
                {[["Blend Mode", "Opaque", "blend"], ["Decal Blend Mode", "Translucent", "decal"], ["Shading Model", "Default Lit", "shading"]].map(([label, value, id]) => (
                  <Row key={id} $h={26}>
                    <RowLabel htmlFor={id}>{label}</RowLabel>
                    <RowValue><Dropdown id={id} value={value} w={104} look="dim" /></RowValue>
                  </Row>
                ))}
                {[["Two Sided", "two-sided"], ["Use Material Attributes", "use-attributes"]].map(([label, id]) => (
                  <Row key={id} $h={24}>
                    <RowLabel htmlFor={id}>{label}</RowLabel>
                    <RowValue><CheckBox type="checkbox" id={id} /></RowValue>
                  </Row>
                ))}
                <AssetRow id="subsurface" label="Subsurface Profile" tint="radial-gradient(circle at 50% 80%, #5c4a38, #4b3d30)" bar="#f2b56c" />
                <Expander aria-label="Show advanced"><svg width="10" height="8" viewBox="0 0 10 8"><path d="M0 0h10v1.500H0zM0 3h10L5 8z" fill="#ddd" /></svg></Expander>
              </Category>
              <Category>
                <CategoryTitle><Fold />Translucency</CategoryTitle>
                <Row $h={26}>
                  <RowLabel htmlFor="ssr">Screen Space Reflections</RowLabel>
                  <RowValue><CheckBox type="checkbox" id="ssr" /></RowValue>
                </Row>
              </Category>
              <ScrollTrack><ScrollThumb $h={93} /></ScrollTrack>
            </DetailsScroll>
          </DetailsPanel>
        </Column>

        <Column>
          <Graph>
            <Canvas>
              <WireLayer>{wires.map((w) => <path key={w.join("-")} d={wirePath(w)} />)}</WireLayer>
              {nodes.map((n) => <NodeView key={n.id} n={n} />)}
            </Canvas>
            <Watermark>MATERIAL</Watermark>
            <Vignette />
            <GraphHeader>
              <GraphTitle>outlineAttempt</GraphTitle>
              <ZoomLabel>Zoom -4</ZoomLabel>
            </GraphHeader>
            <Corner />
          </Graph>
          <LowerTab>
            <svg width="16" height="16" viewBox="0 0 16 16"><path d="M2 1h9l3 3v11H2z" fill="#cdd9ee" /><path d="M4 5l5 3.500L4 12" fill="none" stroke="#2b4a86" strokeWidth="2" /><path d="M8 12.500h6" stroke="#2b4a86" strokeWidth="2" /></svg>
            Stats<Grow /><BareButton aria-label="Close Stats"><Cross /></BareButton>
          </LowerTab>
          <StatsPanel />
        </Column>

        <Column>
          <PanelTab>
            <svg width="16" height="13" viewBox="0 0 16 13"><path d="M0 0h3v3H0zM5 1h11v2.500H5zM4 5.500h3V8H4zM8.500 5.500H16V8H8.500zM4 10h3v2.500H4zM8.500 10H16v2.500H8.500z" fill="#dfeef8" /></svg>
            Palette<Grow /><BareButton aria-label="Close Palette"><Cross /></BareButton>
          </PanelTab>
          <PalettePanel>
            <CategoryRow>
              <label htmlFor="category">Category:</label>
              <Dropdown id="category" value="All" />
            </CategoryRow>
            <PaletteSearch><input placeholder="Search" aria-label="Search palette" /><Magnifier /></PaletteSearch>
            <PaletteScroll>
              {palette.map(([group, entries]) => (
                <section key={group}>
                  <GroupName><Fold />{group}</GroupName>
                  <ul>
                    {entries.map((e) => {
                      const [name, key] = e.split("|");
                      return <Entry key={name}><span>{name}</span>{key && <span>{key}</span>}</Entry>;
                    })}
                  </ul>
                </section>
              ))}
              <PaletteTrack><ScrollThumb $h={80} /></PaletteTrack>
            </PaletteScroll>
          </PalettePanel>
        </Column>
      </Main>

      <TaskBar>
        <StartButton aria-label="Start"><svg width="16" height="16" viewBox="0 0 16 16" fill="#fff"><path d="M0 2.200l6.500-.9v6.200H0zM7.300 1.200L16 0v7.500H7.300zM0 8.300h6.500v6.300L0 13.700zM7.300 8.300H16V16l-8.700-1.200z" /></svg></StartButton>
        <TaskSearch placeholder="Search the web and Windows" aria-label="Search the web and Windows" />
        <TaskApps>
          <TaskApp aria-label="Task view"><svg viewBox="0 0 26 26" fill="none" stroke="#eee" strokeWidth="1.400"><path d="M8 6h10v14H8zM5.500 8H3.500v10h2M20.500 8h2v10h-2" /></svg></TaskApp>
          <TaskApp $run aria-label="Chrome"><svg viewBox="0 0 26 26"><circle cx="13" cy="13" r="11" fill="#f0c53c" /><path d="M13 13L3.500 7.500A11 11 0 0 1 22.500 7.500H13z" fill="#d8493c" /><path d="M3.500 7.500L9 16l4 2-2.500 5.800A11 11 0 0 1 3.500 7.500z" fill="#4aa35a" /><circle cx="13" cy="13" r="5" fill="#fff" /><circle cx="13" cy="13" r="4" fill="#4585ee" /></svg></TaskApp>
          <TaskApp $run aria-label="File Explorer"><svg viewBox="0 0 26 26"><path d="M2 4h8l2 2h12v17H2z" fill="#f4d272" /><path d="M2 4h8v3H2z" fill="#e0b040" /><path d="M6 14h14v9h-4v-4h-6v4H6z" fill="#3fb4ec" /></svg></TaskApp>
          <TaskApp aria-label="Maya">{maya("MAYA")}</TaskApp>
          <TaskApp $run aria-label="Photoshop"><svg viewBox="0 0 26 26"><path d="M2.500 2.500h21v21h-21z" fill="#06202c" stroke="#27b5e8" strokeWidth="1.600" /><text x="6" y="18" fontSize="12" fontFamily="Open Sans" fontWeight="600" fill="#35bdec">Ps</text></svg></TaskApp>
          <TaskApp $run aria-label="Mudbox">{maya("MODU")}</TaskApp>
          <TaskApp $run aria-label="Edge"><svg viewBox="0 0 26 26"><path d="M2 12C3 5 8 2 13.500 2 20 2 24 7 24 13v2H9.500c.3 4 3.500 5.500 7 5.500 2.500 0 4.500-.7 6-1.600v5C20 25 18 25.500 15.500 25.500 9 25.500 5 21 5 16c0-4 2-7 5-8.500C6.500 7.700 4 9.500 2 12zm7.600-1.500h8c0-2.500-1.300-4-3.900-4s-3.700 1.700-4.100 4z" fill="#1a7fdc" /></svg></TaskApp>
          <TaskApp $run aria-label="Epic Games"><svg viewBox="0 0 26 26"><path d="M2 0h22v21l-11 5-11-5z" fill="#0a0a0a" /><text x="13" y="12" fontSize="10" fontWeight="700" fontFamily="Roboto Condensed, Roboto" textAnchor="middle" fill="#f2f2f2">EPIC</text><text x="13" y="18" fontSize="4" fontWeight="700" fontFamily="Roboto" textAnchor="middle" fill="#ddd">GAMES</text><path d="M9 21l4 2 4-2" stroke="#ddd" fill="none" /></svg></TaskApp>
          <TaskApp $run $active aria-label="Unreal Engine"><svg viewBox="0 0 26 26"><circle cx="13" cy="13" r="11.500" fill="#222" stroke="#bbb" strokeWidth="1.400" /><g transform="translate(5 5) scale(.68)"><UnrealMark size={24} /></g></svg></TaskApp>
        </TaskApps>
        <Grow />
        <Tray>
          <svg width="14" height="8" fill="none" stroke="#eee" strokeWidth="1.500"><path d="M1 7l6-5.500L13 7" /></svg>
          <svg width="20" height="16" viewBox="0 0 20 16" fill="none" stroke="#eee" strokeWidth="1.300"><path d="M5 2.500h12v8H4V7M9 10.500v4M6 14.500h7M1.500 1.500h4v4h-4zM3.500 5.500v3" /></svg>
          <svg width="20" height="16" viewBox="0 0 20 16" fill="none" stroke="#eee" strokeWidth="1.300"><path d="M2 5.500h3l4-3.500v12L5 10.500H2zM11 6q1.500 2 0 4M13 4q3 4 0 8" /><path d="M15.500 2q4.500 6 0 12" stroke="#888" /></svg>
          <svg width="20" height="18" viewBox="0 0 20 18"><path d="M2 1h16v12h-5l-3 3-3-3H2z" fill="#fff" /><path d="M5 4.500h10M5 7h10M5 9.500h6" stroke="#222" /></svg>
          <svg width="24" height="14" viewBox="0 0 24 14" fill="none" stroke="#eee"><path d="M1 1h22v12H1z" strokeWidth="1.300" /><path d="M3 4h18M3 7h18" strokeDasharray="1.500 1.500" strokeWidth="1.500" /><path d="M3 10h2M7 10h10M19 10h2" /></svg>
        </Tray>
        <Clock>11:24 PM<br />9/17/2017</Clock>
        <ShowDesktop aria-label="Show desktop" />
      </TaskBar>
    </Shell>
  );
}
